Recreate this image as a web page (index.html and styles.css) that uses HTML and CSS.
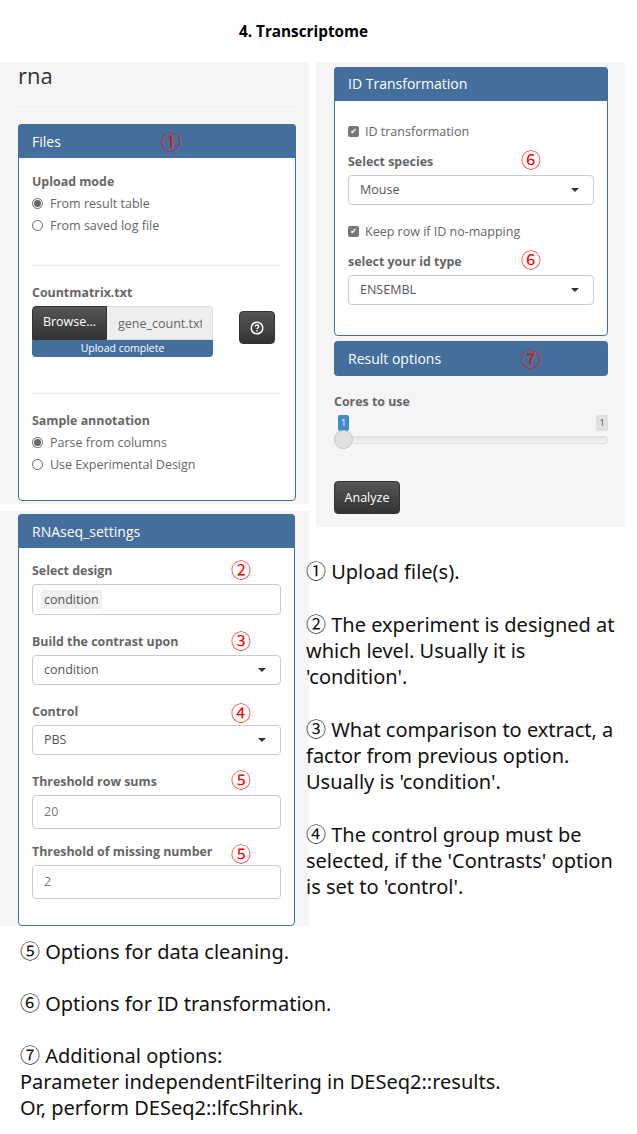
FILE: index.html
```html
<!DOCTYPE html>
<html lang="en">

<head>
    <meta charset="UTF-8">
    <title>4. Transcriptome</title>
    <link rel="stylesheet" href="styles.css">
</head>

<body>
    <h1 class="page-title">4. Transcriptome</h1>

    <div class="columns">
        <!-- Left column: two screenshots of the sidebar -->
        <div class="column-left">
            <div class="shot shot-files">
                <div class="app-title">rna</div>
                <hr class="app-rule">
                <div class="box box-files">
                    <div class="box-header">Files<span class="mark mark-files">①</span></div>
                    <div class="box-body">
                        <div class="field-label label-radio">Upload mode</div>
                        <div class="radio"><span class="radio-dot on"></span>From result table</div>
                        <div class="radio"><span class="radio-dot"></span>From saved log file</div>
                        <hr class="box-rule rule-upload">
                        <div class="field-label">Countmatrix.txt</div>
                        <div class="upload-row">
                            <div class="upload">
                                <div class="file-input">
                                    <span class="btn-dark btn-browse">Browse...</span>
                                    <span class="file-name"><span class="file-text">gene_count.txt</span></span>
                                </div>
                                <div class="upload-bar">Upload complete</div>
                            </div>
                            <span class="btn-dark btn-help">
                                <svg width="14" height="14" viewBox="0 0 14 14">
                                    <circle cx="7" cy="7" r="5.8" fill="none" stroke="#fff" stroke-width="1.5"/>
                                    <path d="M5.2 5.6 C5.2 3.4 8.8 3.5 8.8 5.5 C8.8 6.9 7 6.8 7 8.3" fill="none" stroke="#fff" stroke-width="1.3"/>
                                    <rect x="6.3" y="9.2" width="1.4" height="1.4" fill="#fff"/>
                                </svg>
                            </span>
                        </div>
                        <hr class="box-rule rule-sample">
                        <div class="field-label label-radio">Sample annotation</div>
                        <div class="radio"><span class="radio-dot on"></span>Parse from columns</div>
                        <div class="radio"><span class="radio-dot"></span>Use Experimental Design</div>
                    </div>
                </div>
            </div>

            <div class="shot shot-settings">
                <div class="box box-settings">
                    <div class="box-header">RNAseq_settings</div>
                    <div class="box-body">
                        <div class="group">
                            <div class="field-label">Select design<span class="mark mark-left">②</span></div>
                            <div class="control control-multi"><span class="chip">condition</span></div>
                        </div>
                        <div class="group">
                            <div class="field-label">Build the contrast upon<span class="mark mark-left">③</span></div>
                            <div class="control select">condition<span class="caret"></span></div>
                        </div>
                        <div class="group">
                            <div class="field-label">Control<span class="mark mark-left mark-low">④</span></div>
                            <div class="control select">PBS<span class="caret"></span></div>
                        </div>
                        <div class="group group-tight">
                            <div class="field-label">Threshold row sums<span class="mark mark-left mark-high">⑤</span></div>
                            <div class="control number">20</div>
                        </div>
                        <div class="group">
                            <div class="field-label">Threshold of missing number<span class="mark mark-left mark-lower">⑤</span></div>
                            <div class="control number">2</div>
                        </div>
                    </div>
                </div>
            </div>
        </div>

        <!-- Right column: ID options and first notes -->
        <div class="column-right">
            <div class="shot shot-id">
                <div class="box box-id">
                    <div class="box-header">ID Transformation</div>
                    <div class="box-body">
                        <div class="check"><span class="check-box">✔</span>ID transformation</div>
                        <div class="field-label">Select species<span class="mark mark-right">⑥</span></div>
                        <div class="control select">Mouse<span class="caret"></span></div>
                        <div class="check check-second"><span class="check-box">✔</span>Keep row if ID no-mapping</div>
                        <div class="field-label">select your id type<span class="mark mark-right">⑥</span></div>
                        <div class="control select">ENSEMBL<span class="caret"></span></div>
                    </div>
                </div>
                <div class="box-header box-collapsed">Result options<span class="mark mark-result">⑦</span></div>
                <div class="field-label cores-label">Cores to use</div>
                <div class="slider">
                    <div class="slider-labels">
                        <span class="slider-from">1</span>
                        <span class="slider-to">1</span>
                    </div>
                    <div class="slider-track"></div>
                    <div class="slider-handle"></div>
                </div>
                <span class="btn-dark btn-analyze">Analyze</span>
            </div>

            <div class="notes notes-right">
                <p>① Upload file(s).</p>
                <p>② The experiment is designed at<br>which level. Usually it is<br>'condition'.</p>
                <p>③ What comparison to extract, a<br>factor from previous option.<br>Usually is 'condition'.</p>
                <p>④ The control group must be<br>selected, if the 'Contrasts' option<br>is set to 'control'.</p>
            </div>
        </div>
    </div>

    <div class="notes notes-bottom">
        <p>⑤ Options for data cleaning.</p>
        <p>⑥ Options for ID transformation.</p>
        <p>⑦ Additional options:<br>Parameter independentFiltering in DESeq2::results.<br>Or, perform DESeq2::lfcShrink.</p>
    </div>
</body>

</html>
```

FILE: styles.css
```css
* {
    box-sizing: border-box;
}

body {
    margin: 0;
    background-color: #fff;
    font-family: 'Open Sans', sans-serif;
    font-size: 12.5px;
    color: #666;
}

.page-title {
    height: 62px;
    margin: 0;
    padding-top: 21px;
    padding-right: 30px;
    font-size: 15.3px;
    line-height: 20px;
    font-weight: 700;
    color: #000;
    text-align: center;
}

.columns {
    display: flex;
    gap: 7px;
}

.column-left {
    width: 309px;
    display: flex;
    flex-direction: column;
    gap: 7px;
}

.column-right {
    width: 309px;
}

.shot {
    background-color: #f5f5f5;
}

.shot-files {
    height: 442px;
    padding: 0 13px 0 18px;
}

.shot-settings {
    height: 415px;
    padding: 3px 14px 0 18px;
}

.shot-id {
    height: 465px;
    padding: 5px 17px 0 18px;
}

.app-title {
    height: 30px;
    margin-top: -2px;
    font-size: 22px;
    line-height: 30px;
    color: #333;
}

.app-rule {
    margin: 16px 0 17px;
    border: 0;
    border-top: 1px solid #eee;
}

.box {
    background-color: #fff;
    border: 1px solid #446e9b;
    border-radius: 4px;
}

.box-files {
    height: 377px;
}

.box-settings {
    height: 412px;
}

.box-id {
    height: 269px;
}

.box-header {
    position: relative;
    height: 34px;
    margin: -1px -1px 0;
    padding-left: 14px;
    background-color: #446e9b;
    border-radius: 4px 4px 0 0;
    color: #fff;
    font-size: 14px;
    line-height: 35px;
}

.box-id .box-header {
    line-height: 33px;
}

.box-collapsed {
    height: 35px;
    margin: 5px 0 0;
    border-radius: 4px;
}

.box-body {
    padding: 15px 13px 14px;
}

.box-settings .box-body {
    padding-top: 14px;
}

.box-id .box-body {
    padding-top: 19px;
}

.field-label {
    position: relative;
    height: 22px;
    font-size: 12.4px;
    font-weight: 700;
    line-height: 17px;
}

.label-radio {
    height: 19px;
}

.radio {
    display: flex;
    align-items: center;
    height: 22.5px;
}

.radio-dot {
    position: relative;
    width: 11px;
    height: 11px;
    margin-right: 7px;
    background-color: #fff;
    border: 1px solid #666;
    border-radius: 50%;
}

.radio-dot.on::after {
    content: "";
    position: absolute;
    top: 1px;
    left: 1px;
    width: 7px;
    height: 7px;
    background-color: #666;
    border-radius: 50%;
}

.box-rule {
    margin: 0;
    border: 0;
    border-top: 1px solid #eee;
}

.rule-upload {
    margin: 28px 0 18px;
}

.rule-sample {
    margin: 36px 0 18px;
}

.upload-row {
    display: flex;
    align-items: flex-start;
}

.upload {
    width: 181px;
}

.file-input {
    display: flex;
    height: 34px;
}

.btn-dark {
    display: inline-block;
    background: linear-gradient(#555, #333);
    border: 1px solid #333;
    border-radius: 4px;
    color: #fff;
}

.btn-browse {
    flex: 0 0 75px;
    border-radius: 4px 0 0 0;
    text-align: center;
    line-height: 30px;
}

.file-name {
    flex: 1;
    min-width: 0;
    padding: 0 10px 0 11px;
    background-color: #eee;
    border: 1px solid #ddd;
    border-left: 0;
    border-radius: 0 4px 0 0;
    color: #666;
    line-height: 34px;
}

.file-text {
    display: block;
    overflow: hidden;
    white-space: nowrap;
}

.upload-bar {
    height: 17px;
    background-color: #446e9b;
    border-radius: 0 0 4px 4px;
    color: #fff;
    font-size: 10.5px;
    line-height: 17px;
    text-align: center;
}

.btn-help {
    display: flex;
    align-items: center;
    justify-content: center;
    width: 36px;
    height: 33px;
    margin: 5px 0 0 26px;
}

.group {
    margin-bottom: 18px;
}

.group-tight {
    margin-bottom: 14px;
}

.control {
    height: 30px;
    padding-left: 11px;
    background-color: #fff;
    border: 1px solid #ccc;
    border-radius: 4px;
    color: #555;
    line-height: 28px;
}

.select {
    position: relative;
}

.number {
    height: 34px;
    color: #777;
    line-height: 32px;
}

.control-multi {
    display: flex;
    align-items: center;
    height: 31px;
    padding-left: 8px;
}

.chip {
    height: 19px;
    padding: 0 3px;
    background-color: #f0f0f0;
    border-radius: 2px;
    line-height: 19px;
}

.caret {
    position: absolute;
    top: 12px;
    right: 14px;
    border-top: 4px solid #333;
    border-left: 4px solid transparent;
    border-right: 4px solid transparent;
}

.mark {
    position: absolute;
    color: #f00;
    font-family: 'Noto Sans CJK SC', sans-serif;
    font-size: 20px;
    font-weight: 400;
    line-height: 20px;
}

.mark-files {
    top: 8px;
    left: 143px;
}

.mark-left {
    top: -2px;
    left: 199px;
}

.mark-low {
    top: 0;
}

.mark-high {
    top: -3px;
}

.mark-lower {
    top: 1px;
}

.mark-right {
    top: -3px;
    left: 173px;
}

.mark-result {
    top: 8px;
    left: 187px;
}

.check {
    display: flex;
    align-items: center;
    height: 22px;
    margin-bottom: 11px;
}

.check-second {
    margin-top: 15px;
}

.check-box {
    width: 11px;
    height: 11px;
    margin-right: 6px;
    background-color: #777;
    border-radius: 2px;
    color: #fff;
    font-family: 'DejaVu Sans', sans-serif;
    font-size: 8px;
    line-height: 11px;
    text-align: center;
}

.cores-label {
    margin-top: 17px;
    height: 22px;
}

.slider {
    position: relative;
    height: 50px;
}

.slider-labels {
    display: flex;
    justify-content: space-between;
    height: 16px;
    padding-left: 4px;
}

.slider-from,
.slider-to {
    width: 11px;
    border-radius: 2px;
    font-size: 9px;
    line-height: 16px;
    text-align: center;
}

.slider-to {
    width: 12px;
    background-color: #e0e0e0;
    color: #555;
}

.slider-from {
    background-color: #428bca;
    color: #fff;
}

.slider-track {
    height: 8px;
    margin-top: 5px;
    background: linear-gradient(#e4e4e4, #f5f5f5);
    border: 1px solid #ddd;
    border-radius: 4px;
}

.slider-handle {
    position: absolute;
    top: 15px;
    left: 0;
    width: 19px;
    height: 19px;
    background-color: #e0e0e0;
    border: 1px solid #c4c4c4;
    border-radius: 50%;
}

.btn-analyze {
    display: block;
    width: 66px;
    height: 33px;
    margin-top: 16px;
    line-height: 31px;
    text-align: center;
}

.notes {
    color: #111;
    font-family: 'Noto Sans', 'Noto Sans CJK SC', sans-serif;
    font-size: 20px;
    line-height: 26.25px;
    white-space: nowrap;
}

.notes p {
    margin: 0 0 26.25px;
}

.notes-right {
    margin: 32px 0 0 -10px;
}

.notes-bottom {
    margin: 12px 0 0 20px;
    line-height: 26px;
}

.notes-bottom p {
    margin-bottom: 26px;
}
```
